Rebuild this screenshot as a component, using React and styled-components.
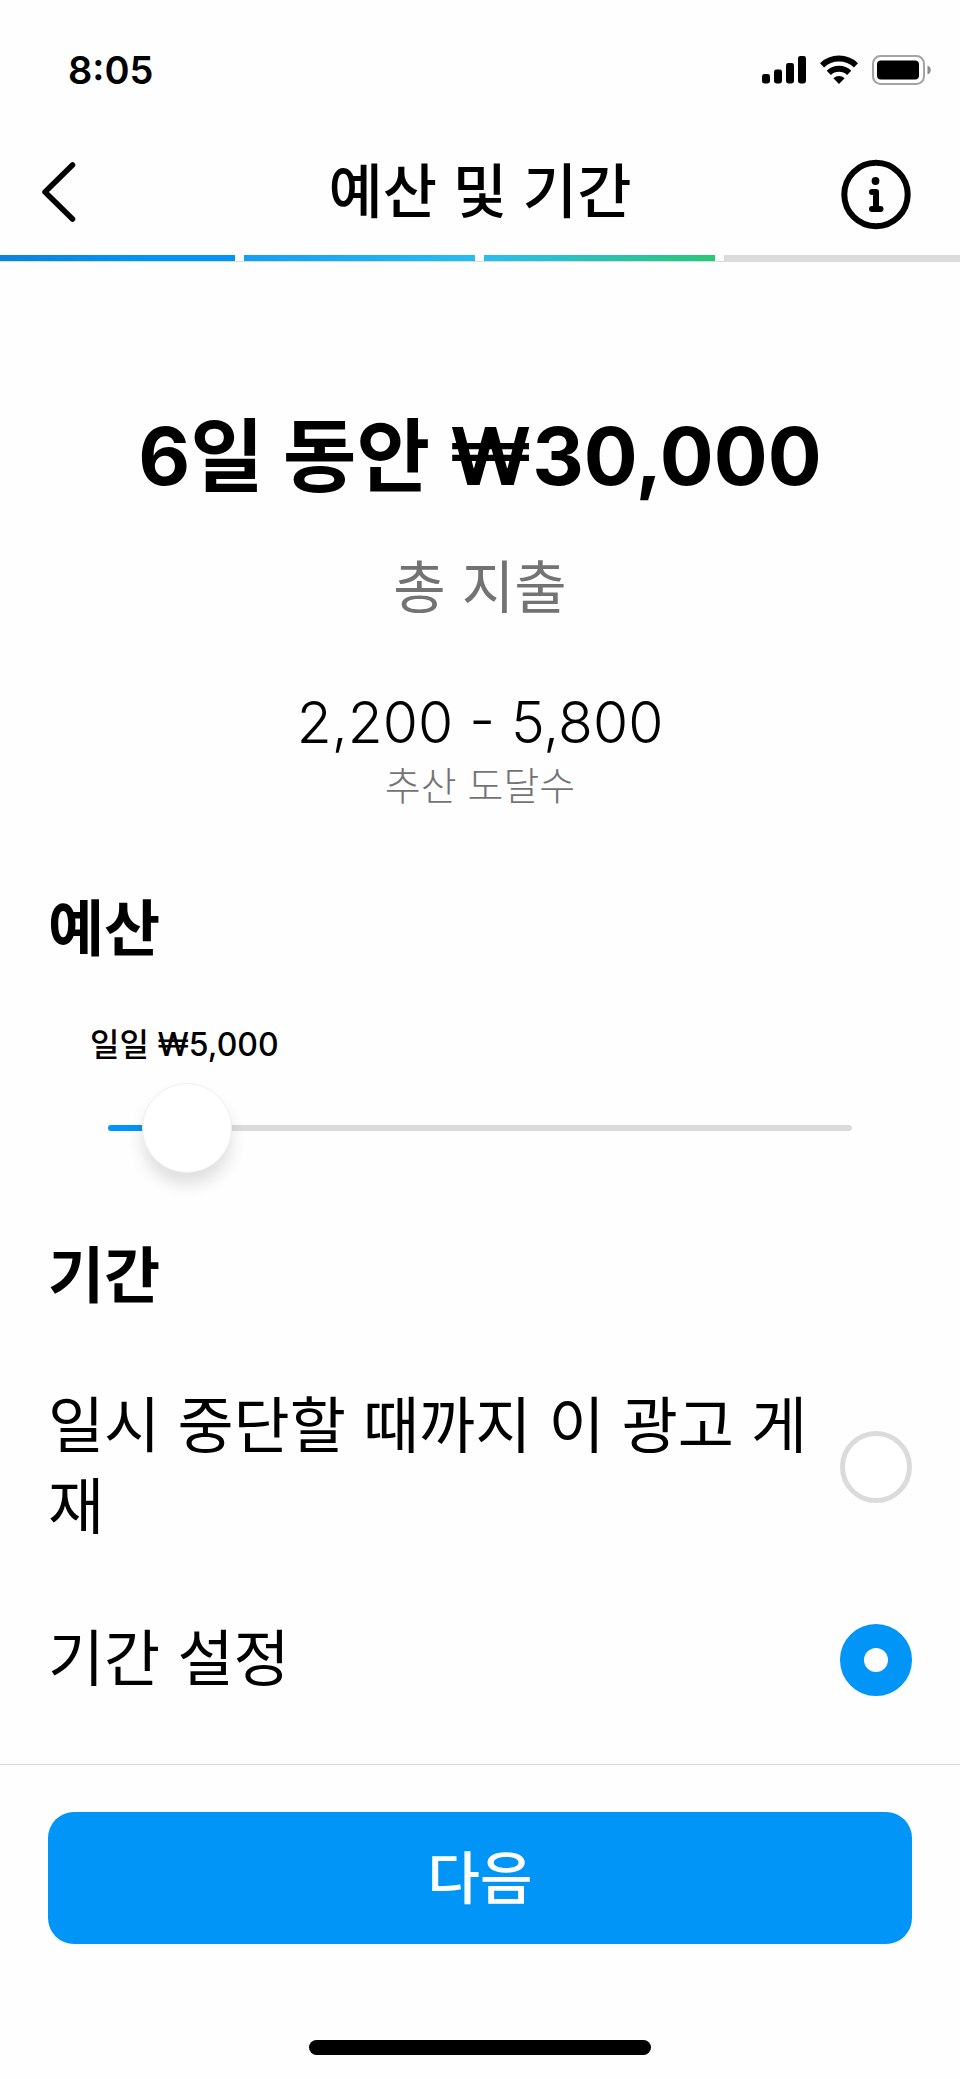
import React, { useState } from "react";
import styled, { createGlobalStyle } from "styled-components";

const GlobalStyle = createGlobalStyle`
  * {
    box-sizing: border-box;
  }
  body {
    margin: 0;
    background-color: #fefefe;
    color: black;
    font-family: Inter, "Noto Sans CJK KR", sans-serif;
  }
  button, input {
    font-family: inherit;
  }
  h1, h2, p, ol, fieldset {
    margin: 0;
    padding: 0;
    border: none;
  }
`;

const Wrapper = styled.div`
  min-height: 100vh;
  display: flex;
  flex-direction: column;
`;

const StatusBar = styled.div`
  height: 140px;
  padding: 0 29px 0 68px;
  display: flex;
  align-items: center;
  justify-content: space-between;
`;

const Time = styled.span`
  font-size: 38px;
  font-weight: 600;
`;

const StatusIcons = styled.div`
  display: flex;
  align-items: center;
  gap: 14px;
`;

const Header = styled.header`
  height: 115px;
  padding: 0 40px 12px;
  display: grid;
  grid-template-columns: 80px 1fr 80px;
  align-items: center;
`;

const Title = styled.h1`
  font-size: 59px;
  font-weight: 500;
  line-height: 72px;
  text-align: center;
`;

const IconButton = styled.button`
  height: 80px;
  padding: 0;
  display: flex;
  align-items: center;
  background: none;
  border: none;
`;

const Steps = styled.ol`
  display: grid;
  grid-template-columns: repeat(4, 1fr);
  list-style: none;
  border-bottom: 1px solid #dbdbdb;
`;

const Step = styled.li`
  height: 6px;
  margin: 0 5px 0 4px;
  background: ${(props) => props.$fill};
  &:first-child {
    margin-left: 0;
  }
  &:last-child {
    margin-right: 0;
  }
`;

const Content = styled.main`
  flex: 1;
  padding: 146px 48px 64px;
`;

const Summary = styled.section`
  display: flex;
  flex-direction: column;
  align-items: center;
  text-align: center;
`;

const Total = styled.p`
  font-size: 80px;
  font-weight: 700;
  line-height: 96px;
`;

const TotalCaption = styled.p`
  margin-top: 48px;
  color: #737373;
  font-size: 57px;
  line-height: 72px;
`;

const Reach = styled.p`
  margin-top: 63px;
  font-size: 57px;
  font-weight: 300;
  line-height: 72px;
`;

const ReachCaption = styled.p`
  margin-top: 3px;
  color: #737373;
  font-size: 39px;
  font-weight: 300;
  line-height: 48px;
`;

const SectionTitle = styled.h2`
  font-size: 61px;
  font-weight: 700;
  line-height: 72px;
`;

const Budget = styled.section`
  margin-top: 83px;
`;

const BudgetField = styled.div`
  margin-top: 60px;
  padding: 0 60px;
  display: flex;
  flex-direction: column;
  gap: 18px;
`;

const BudgetLabel = styled.label`
  margin-left: -18px;
  font-size: 32px;
  font-weight: 500;
  line-height: 40px;
`;

const Slider = styled.input`
  appearance: none;
  width: 100%;
  height: 90px;
  margin: 0;
  background: none;
  &::-webkit-slider-runnable-track {
    height: 6px;
    border-radius: 3px;
    background: linear-gradient(
      to right,
      #0095f6 ${(props) => props.$percent}%,
      #dbdbdb ${(props) => props.$percent}%
    );
  }
  &::-webkit-slider-thumb {
    appearance: none;
    width: 90px;
    height: 90px;
    margin-top: -42px;
    border: 1px solid #efefef;
    border-radius: 50%;
    background-color: white;
    box-shadow: 0 12px 16px rgba(0, 0, 0, 0.12);
  }
`;

const Duration = styled.section`
  margin-top: 67px;
`;

const Options = styled.fieldset`
  min-width: 0;
  margin-top: 74px;
  display: flex;
  flex-direction: column;
  gap: 71px;
`;

const Option = styled.label`
  display: flex;
  align-items: center;
  justify-content: space-between;
  gap: 16px;
  font-size: 61px;
  line-height: 81px;
`;

const Radio = styled.input`
  appearance: none;
  flex: none;
  width: 72px;
  height: 72px;
  margin: 0;
  border: 5px solid #dbdbdb;
  border-radius: 50%;
  background-color: white;
  &:checked {
    border: 24px solid #0095f6;
  }
`;

const Footer = styled.footer`
  padding: 47px 48px 24px;
  border-top: 1px solid #dbdbdb;
  display: flex;
  flex-direction: column;
  align-items: center;
  gap: 96px;
`;

const NextButton = styled.button`
  width: 100%;
  height: 132px;
  padding: 0 0 8px;
  border: none;
  border-radius: 26px;
  background-color: #0095f6;
  color: white;
  font-size: 57px;
  font-weight: 500;
`;

const HomeIndicator = styled.div`
  width: 342px;
  height: 15px;
  border-radius: 8px;
  background-color: black;
`;

const SignalIcon = () => (
  <svg width="44" height="30" viewBox="0 0 44 30">
    <rect x="0" y="19" width="8" height="9.5" rx="2.4" />
    <rect x="12" y="14.5" width="8" height="14" rx="2.4" />
    <rect x="24" y="8" width="8" height="20.5" rx="2.4" />
    <rect x="36" y="1" width="8" height="27.5" rx="2.4" />
  </svg>
);

const WifiIcon = () => (
  <svg width="38" height="30" viewBox="0 0 38 30">
    <g fill="none" stroke="black" strokeWidth="6">
      <path d="M2 10.400a24.600 24.600 0 0 1 34 0" />
      <path d="M8.800 17.800a14.600 14.600 0 0 1 20.400 0" />
    </g>
    <path d="M13.400 23.200a8.200 8.200 0 0 1 11.200 0L19 29z" />
  </svg>
);

const BatteryIcon = () => (
  <svg width="59" height="30" viewBox="0 0 59 30">
    <rect
      x="1"
      y="1"
      width="51"
      height="28"
      rx="7.5"
      fill="none"
      stroke="#a3a3a3"
      strokeWidth="2"
    />
    <rect x="5" y="5.5" width="42" height="19" rx="4" />
    <path d="M55.5 10.5c4.4 1.4 4.4 7.6 0 9z" fill="#8c8c8c" />
  </svg>
);

const BackIcon = () => (
  <svg width="38" height="62" viewBox="0 0 38 62">
    <path
      d="M32.5 4L5 31l27.5 27"
      fill="none"
      stroke="black"
      strokeWidth="5.5"
      strokeLinecap="round"
      strokeLinejoin="round"
    />
  </svg>
);

const InfoIcon = () => (
  <svg width="80" height="78" viewBox="0 0 80 78">
    <g fill="none" stroke="black" strokeLinecap="round" strokeLinejoin="round">
      <circle cx="36" cy="41.5" r="31.7" strokeWidth="6" />
      <path d="M32 39h4v17M32 56h8.500" strokeWidth="6" />
    </g>
    <circle cx="35.5" cy="28" r="3.9" />
  </svg>
);

const steps = [
  "linear-gradient(to right, #0a84de, #0095f6 60%)",
  "linear-gradient(to right, #139ff5, #27bdf0)",
  "linear-gradient(to right, #2bbdf0, #28c878)",
  "#dbdbdb",
];

const options = [
  { id: "ongoing", label: "일시 중단할 때까지 이 광고 게재" },
  { id: "period", label: "기간 설정" },
];

const MIN_BUDGET = 2000;
const MAX_BUDGET = 60000;

const App = () => {
  const [budget, setBudget] = useState(5000);
  const [duration, setDuration] = useState("period");

  // keeps the end of the blue part under the middle of the thumb
  const percent = ((budget - MIN_BUDGET) / (MAX_BUDGET - MIN_BUDGET)) * 88 + 6;

  return (
    <Wrapper>
      <GlobalStyle />
      <StatusBar>
        <Time>8:05</Time>
        <StatusIcons>
          <SignalIcon />
          <WifiIcon />
          <BatteryIcon />
        </StatusIcons>
      </StatusBar>
      <Header>
        <IconButton type="button">
          <BackIcon />
        </IconButton>
        <Title>예산 및 기간</Title>
        <IconButton type="button">
          <InfoIcon />
        </IconButton>
      </Header>
      <Steps>
        {steps.map((fill) => (
          <Step key={fill} $fill={fill} />
        ))}
      </Steps>
      <Content>
        <Summary>
          <Total>6일 동안 ₩{(budget * 6).toLocaleString("en-US")}</Total>
          <TotalCaption>총 지출</TotalCaption>
          <Reach>2,200 - 5,800</Reach>
          <ReachCaption>추산 도달수</ReachCaption>
        </Summary>
        <Budget>
          <SectionTitle>예산</SectionTitle>
          <BudgetField>
            <BudgetLabel htmlFor="budget">
              일일 ₩{budget.toLocaleString("en-US")}
            </BudgetLabel>
            <Slider
              id="budget"
              type="range"
              min={MIN_BUDGET}
              max={MAX_BUDGET}
              step={1000}
              value={budget}
              $percent={percent}
              onChange={(e) => setBudget(Number(e.target.value))}
            />
          </BudgetField>
        </Budget>
        <Duration>
          <SectionTitle>기간</SectionTitle>
          <Options>
            {options.map(({ id, label }) => (
              <Option key={id} htmlFor={id}>
                {label}
                <Radio
                  id={id}
                  type="radio"
                  name="duration"
                  checked={duration === id}
                  onChange={() => setDuration(id)}
                />
              </Option>
            ))}
          </Options>
        </Duration>
      </Content>
      <Footer>
        <NextButton type="button">다음</NextButton>
        <HomeIndicator />
      </Footer>
    </Wrapper>
  );
};

export default App;
